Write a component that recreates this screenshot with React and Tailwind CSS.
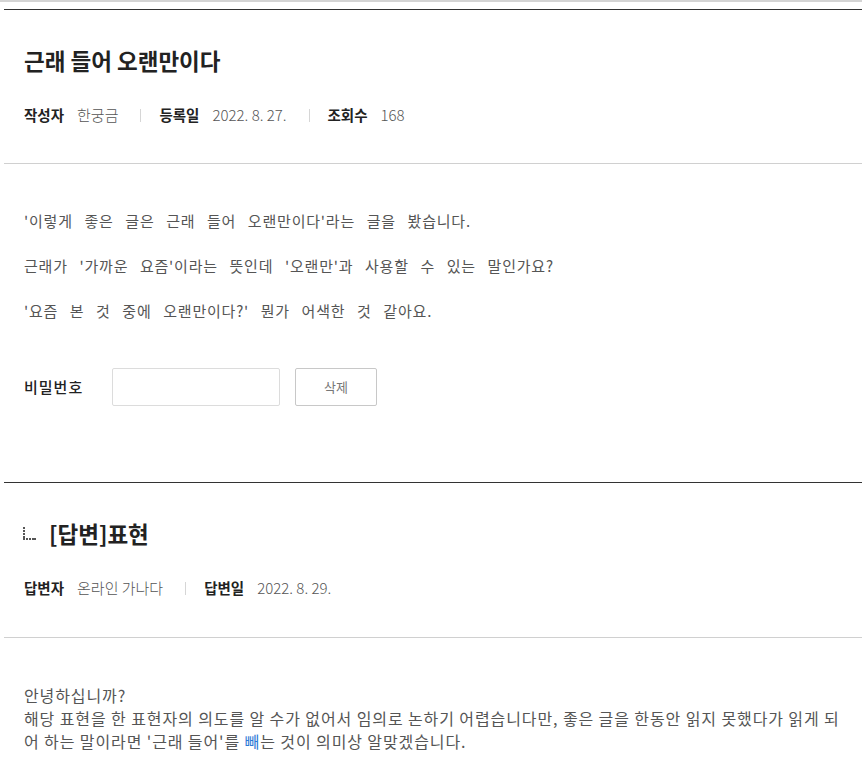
import React from 'react';

const font = "font-['Noto_Sans_CJK_KR','Noto_Sans',sans-serif]";

function Meta({ items }) {
  return (
    <div className="flex items-center leading-[22px]">
      {items.map((it, i) => (
        <div key={it.label} className="flex items-center">
          {i > 0 && <span className="ml-[22px] mr-[18px] h-[13px] w-px bg-[#d6d6d6]" />}
          <span className="text-[14.5px] font-bold text-[#222]">{it.label}</span>
          <span className="ml-[13px] text-[15px] font-light text-[#555]">{it.value}</span>
        </div>
      ))}
    </div>
  );
}

function ReplyIcon() {
  return (
    <svg width="13" height="13" viewBox="0 0 13 13" className="mr-[13px] -ml-px">
      {[0, 3, 6, 9].map((y) => (
        <rect key={'v' + y} x="0" y={y} width="2" height="2" fill="#555" />
      ))}
      {[0, 3, 6, 9, 11].map((x) => (
        <rect key={'h' + x} x={x} y="11" width="2" height="2" fill="#555" />
      ))}
    </svg>
  );
}

export default function App() {
  return (
    <div className={`w-[862px] h-[779px] overflow-hidden bg-white ${font}`}>
      <div className="h-[2px] bg-[#d4d4d4]" />

      <div className="ml-1 mt-[7px]">
        {/* Question header */}
        <div className="border-t border-[#333] pt-[35px] pb-[37px] px-5">
          <h1 className="text-[22.5px] leading-[30px] font-bold text-[#222]">근래 들어 오랜만이다</h1>
          <div className="mt-[29px]">
            <Meta
              items={[
                { label: '작성자', value: '한궁금' },
                { label: '등록일', value: '2022. 8. 27.' },
                { label: '조회수', value: '168' },
              ]}
            />
          </div>
        </div>

        {/* Question body */}
        <div className="border-t border-[#d0d0d0] pt-[46px] px-5 text-[15px] leading-[22px] tracking-[0.8px] [word-spacing:7.5px] text-[#555]">
          <p>'이렇게 좋은 글은 근래 들어 오랜만이다'라는 글을 봤습니다.</p>
          <p className="mt-[23px]">근래가 '가까운 요즘'이라는 뜻인데 '오랜만'과 사용할 수 있는 말인가요?</p>
          <p className="mt-[23px]">'요즘 본 것 중에 오랜만이다?' 뭔가 어색한 것 같아요.</p>
        </div>

        {/* Password row */}
        <div className="flex items-center px-5 mt-[46px] pb-[76px]">
          <span className="w-[88px] text-[15px] tracking-[1px] font-medium text-[#222]">비밀번호</span>
          <input
            type="password"
            className="w-[168px] h-[38px] border border-[#dcdcdc] rounded-[2px] outline-none"
          />
          <button className="ml-[15px] w-[82px] h-[38px] border border-[#c8c8c8] rounded-[2px] text-[13px] text-[#777] bg-white">
            삭제
          </button>
        </div>

        {/* Answer header */}
        <div className="border-t border-[#333] pt-[35px] pb-[38px] px-5">
          <div className="flex items-center">
            <ReplyIcon />
            <h2 className="text-[22.5px] leading-[30px] font-bold text-[#222]">[답변]표현</h2>
          </div>
          <div className="mt-[29px]">
            <Meta
              items={[
                { label: '답변자', value: '온라인 가나다' },
                { label: '답변일', value: '2022. 8. 29.' },
              ]}
            />
          </div>
        </div>

        {/* Answer body */}
        <div className="border-t border-[#d0d0d0] pt-[46px] pl-5 pr-3 text-[16px] leading-[23px] tracking-[0.9px] text-[#555]">
          <p>안녕하십니까?</p>
          <p>
            해당 표현을 한 표현자의 의도를 알 수가 없어서 임의로 논하기 어렵습니다만, 좋은 글을 한동안 읽지 못했다가 읽게 되어 하는 말이라면 '근래 들어'를 <span className="text-[#2b7ad6]">빼</span>는 것이 의미상 알맞겠습니다.
          </p>
        </div>
      </div>
    </div>
  );
}
